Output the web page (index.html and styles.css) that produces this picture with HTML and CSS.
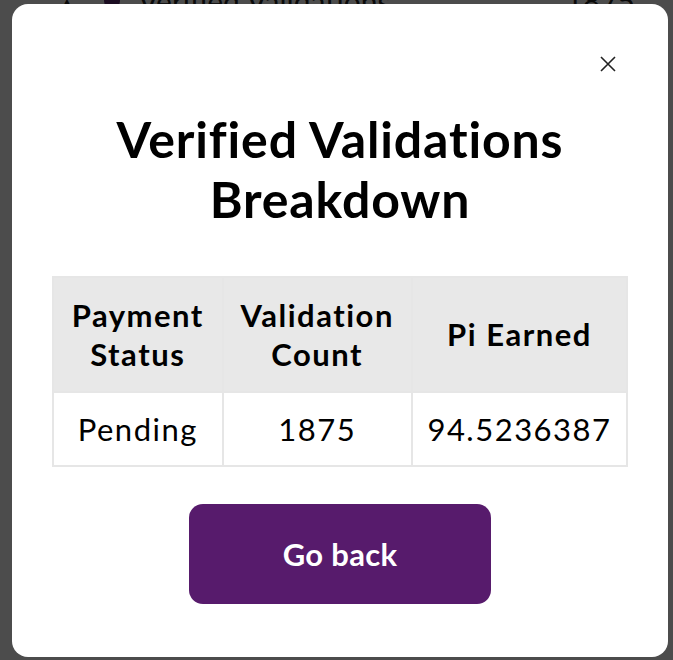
FILE: index.html
```html
<!DOCTYPE html>
<html lang="en">
<head>
<meta charset="utf-8">
<title>Verified Validations Breakdown</title>
<link rel="stylesheet" href="styles.css">
</head>
<body>
<div class="page">
  <div class="bg-row">
    <span class="bg-icon">&#9650;</span>
    <span class="bg-dot"></span>
    <span class="bg-label">Verified Validations</span>
    <span class="bg-count">1875</span>
  </div>
</div>
<div class="overlay">
  <div class="modal" role="dialog" aria-labelledby="modal-title">
    <div class="modal-top">
      <button class="close" aria-label="Close">
        <svg width="16" height="16" viewBox="0 0 16 16"><path d="M1 1L15 15M15 1L1 15" stroke="#222" stroke-width="1.6" fill="none"/></svg>
      </button>
    </div>
    <h1 id="modal-title" class="title">Verified Validations<br>Breakdown</h1>
    <table class="breakdown">
      <thead>
        <tr>
          <th class="c1">Payment<br>Status</th>
          <th class="c2">Validation<br>Count</th>
          <th class="c3">Pi Earned</th>
        </tr>
      </thead>
      <tbody>
        <tr>
          <td>Pending</td>
          <td>1875</td>
          <td>94.5236387</td>
        </tr>
      </tbody>
    </table>
    <div class="actions">
      <button class="go-back">Go back</button>
    </div>
  </div>
</div>
</body>
</html>
```
FILE: styles.css
```css
html, body {
  margin: 0;
  padding: 0;
  height: 100%;
}
body {
  background: #ffffff;
  font-family: "Lato", "Noto Sans", sans-serif;
  color: #000;
  overflow: hidden;
}
.page {
  height: 100%;
}
.bg-row {
  display: flex;
  align-items: center;
  margin-top: -14px;
  padding: 0 38px 0 60px;
  font-size: 30px;
  color: #222;
  height: 30px;
}
.bg-icon {
  font-size: 14px;
  width: 44px;
}
.bg-dot {
  width: 16px;
  height: 16px;
  border-radius: 50%;
  background: #5a2a6e;
  margin-right: 18px;
}
.bg-label {
  flex: 1;
}
.overlay {
  position: fixed;
  inset: 0;
  background: rgba(0, 0, 0, 0.7);
  display: flex;
  align-items: flex-start;
}
.modal {
  margin: 4px 0 0 12px;
  width: 656px;
  height: 653px;
  box-sizing: border-box;
  background: #fff;
  border-radius: 16px;
  padding: 52px 40px 53px;
  display: flex;
  flex-direction: column;
  align-items: center;
}
.modal-top {
  align-self: stretch;
  display: flex;
  justify-content: flex-end;
  height: 16px;
  padding-right: 12px;
}
.close {
  border: 0;
  background: none;
  padding: 0;
  width: 16px;
  height: 16px;
  display: block;
  cursor: pointer;
}
.close svg {
  display: block;
}
.title {
  margin: 37px 0 47px;
  font-size: 50px;
  line-height: 60px;
  letter-spacing: 0.85px;
  font-weight: 700;
  text-align: center;
  color: #000;
}
.breakdown {
  width: 576px;
  border-collapse: collapse;
  table-layout: fixed;
  font-size: 31px;
  letter-spacing: 1.5px;
}
.breakdown th,
.breakdown td {
  border: 2px solid #e6e6e6;
  text-align: center;
  padding: 0;
}
.breakdown th {
  background: #e8e8e8;
  height: 113px;
  font-weight: 700;
  line-height: 39px;
}
.breakdown td {
  height: 72px;
  font-weight: 400;
}
.c1 { width: 29.5%; }
.c2 { width: 33%; }
.c3 { width: 37.5%; }
.actions {
  margin-top: 37px;
}
.go-back {
  width: 302px;
  height: 100px;
  border: 0;
  border-radius: 14px;
  background: #571b6c;
  color: #fff;
  font-family: "Lato", "Noto Sans", sans-serif;
  font-size: 31px;
  letter-spacing: 0.3px;
  font-weight: 700;
  cursor: pointer;
}
```
